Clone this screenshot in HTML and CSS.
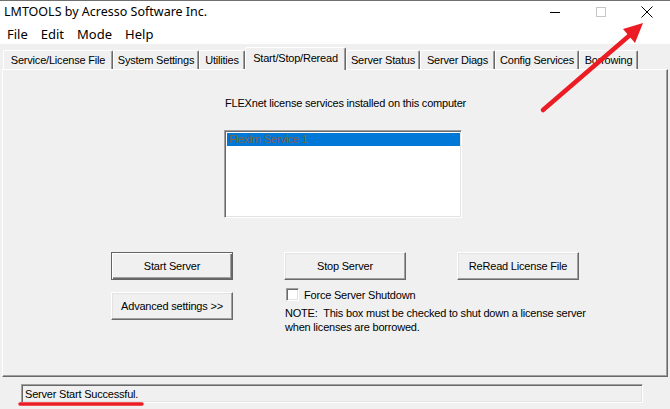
FILE: index.html
```html
<!DOCTYPE html>
<html>
<head>
<meta charset="utf-8">
<link rel="stylesheet" href="styles.css">
</head>
<body>
<div class="window">
  <div class="titlebar">
    <div class="title">LMTOOLS by Acresso Software Inc.</div>
    <div class="caption-buttons">
      <div class="cbtn"><svg width="10" height="10" viewBox="0 0 10 10"><line x1="0" y1="5.5" x2="10" y2="5.5" stroke="#000" stroke-width="1"/></svg></div>
      <div class="cbtn"><svg width="10" height="10" viewBox="0 0 10 10"><rect x="0.5" y="0.5" width="9" height="9" fill="none" stroke="#c6c6c6" stroke-width="1"/></svg></div>
      <div class="cbtn"><svg width="12" height="12" viewBox="0 0 12 12"><path d="M0.5 0.5 L11.5 11.5 M11.5 0.5 L0.5 11.5" stroke="#000" stroke-width="1" fill="none"/></svg></div>
    </div>
  </div>
  <div class="menubar">
    <span class="menu">File</span>
    <span class="menu">Edit</span>
    <span class="menu">Mode</span>
    <span class="menu">Help</span>
  </div>
  <div class="client">
    <div class="tabs">
      <div class="tab t1">Service/License File</div>
      <div class="tab t2">System Settings</div>
      <div class="tab t3">Utilities</div>
      <div class="tab t4 selected">Start/Stop/Reread</div>
      <div class="tab t5">Server Status</div>
      <div class="tab t6">Server Diags</div>
      <div class="tab t7">Config Services</div>
      <div class="tab t8">Borrowing</div>
    </div>
    <div class="panel">
      <div class="caption">FLEXnet license services installed on this computer</div>
      <div class="listbox">
        <div class="item selected-item">FlexIm Service 1</div>
      </div>
      <div class="controls">
        <div class="btn default">Start Server</div>
        <div class="btn">Stop Server</div>
        <div class="btn">ReRead License File</div>
        <div class="btn adv">Advanced settings &gt;&gt;</div>
        <div class="force">
          <div class="checkrow"><span class="checkbox"></span><span>Force Server Shutdown</span></div>
          <div class="note">NOTE:&nbsp; This box must be checked to shut down a license server<br>when licenses are borrowed.</div>
        </div>
      </div>
    </div>
    <div class="status">Server Start Successful.</div>
  </div>
</div>
<svg class="annot" width="670" height="409" viewBox="0 0 670 409">
  <line x1="543" y1="110" x2="630" y2="35" stroke="#ec1c24" stroke-width="4.5" stroke-linecap="round"/>
  <polygon points="643,23 623,29 635,43" fill="#ec1c24"/>
  <line x1="20" y1="404" x2="142" y2="404" stroke="#ec1c24" stroke-width="3.5" stroke-linecap="round"/>
</svg>
</body>
</html>
```

FILE: styles.css
```css
html, body {
  margin: 0;
  padding: 0;
}
body {
  width: 670px;
  height: 409px;
  overflow: hidden;
  background: #f0f0f0;
  position: relative;
  font-family: "Liberation Sans", Arial, sans-serif;
  font-size: 11px;
  letter-spacing: -0.2px;
  color: #000;
}
.window {
  display: flex;
  flex-direction: column;
  height: 409px;
}
.titlebar {
  height: 23px;
  border-top: 1px solid #707070;
  background: #fff;
  display: flex;
  align-items: center;
  justify-content: space-between;
}
.title {
  font-family: "Noto Sans", "Open Sans", sans-serif;
  font-size: 12.5px;
  letter-spacing: 0;
  padding-left: 4px;
  padding-bottom: 2px;
}
.caption-buttons {
  display: flex;
  height: 23px;
}
.cbtn {
  width: 46px;
  display: flex;
  align-items: center;
  justify-content: center;
  padding-bottom: 1px;
}
.menubar {
  height: 20px;
  background: #fff;
  display: flex;
  align-items: center;
  font-family: "Noto Sans", "Open Sans", sans-serif;
  font-size: 13px;
  letter-spacing: 0;
}
.menu {
  padding: 0 6.5px;
}
.menu:first-child {
  padding-left: 7px;
}
.client {
  flex: 1;
  padding-top: 3px;
  display: flex;
  flex-direction: column;
}
.tabs {
  display: flex;
  align-items: flex-end;
  height: 22px;
  padding-left: 3px;
}
.tab {
  height: 19px;
  box-sizing: border-box;
  border-top: 1px solid #fff;
  border-left: 1px solid #fff;
  border-right: 1px solid #696969;
  box-shadow: inset -1px 0 #a0a0a0;
  border-radius: 2px 2px 0 0;
  text-align: center;
  line-height: 18px;
  white-space: nowrap;
}
.t1 { width: 110px; }
.t2 { width: 86px; }
.t3 { width: 46px; }
.t4 { width: 101px; }
.t5 { width: 74px; }
.t6 { width: 75px; }
.t7 { width: 84px; }
.t8 { width: 59px; }
.tab.selected {
  height: 23px;
  margin-bottom: -1px;
  position: relative;
  z-index: 1;
  background: #f0f0f0;
  line-height: 20px;
}
.panel {
  margin-left: 2px;
  width: 666px;
  height: 308px;
  box-sizing: border-box;
  border-top: 1px solid #fff;
  border-left: 1px solid #fff;
  border-right: 1px solid #696969;
  border-bottom: 1px solid #696969;
  box-shadow: inset -1px -1px #a0a0a0;
  padding-top: 26px;
}
.caption {
  margin-left: 222px;
  line-height: 14px;
  white-space: nowrap;
}
.listbox {
  margin-left: 221px;
  margin-top: 20px;
  width: 238px;
  height: 88px;
  box-sizing: border-box;
  background: #fff;
  border-top: 1px solid #a0a0a0;
  border-left: 1px solid #a0a0a0;
  border-right: 1px solid #fff;
  border-bottom: 1px solid #fff;
  box-shadow: inset 1px 1px #696969, inset -1px -1px #e3e3e3;
  padding: 2px 1px 1px 2px;
}
.item {
  height: 13px;
  line-height: 13px;
  padding-left: 2px;
  white-space: nowrap;
}
.selected-item {
  background: #0078d7;
  color: #7f6446;
}
.controls {
  margin-top: 34px;
  margin-left: 108px;
  display: grid;
  grid-template-columns: 122px 122px 122px;
  column-gap: 51px;
  row-gap: 8px;
  align-items: start;
}
.btn {
  height: 28px;
  box-sizing: border-box;
  border: 1px solid;
  border-color: #fff #696969 #696969 #fff;
  box-shadow: inset -1px -1px #a0a0a0, inset 1px 1px #e3e3e3;
  display: flex;
  align-items: center;
  justify-content: center;
  white-space: nowrap;
}
.btn.default {
  border-color: #646464;
  box-shadow: inset 1px 1px #fff, inset -1px -1px #696969, inset -2px -2px #a0a0a0;
}
.btn.adv {
  margin-top: 4px;
}
.force {
  white-space: nowrap;
}
.checkrow {
  display: flex;
  align-items: center;
  height: 13px;
  gap: 5px;
  padding-left: 2px;
}
.checkbox {
  flex: 0 0 13px;
  width: 13px;
  height: 13px;
  box-sizing: border-box;
  background: #fff;
  border-top: 1px solid #a0a0a0;
  border-left: 1px solid #a0a0a0;
  border-right: 1px solid #fff;
  border-bottom: 1px solid #fff;
  box-shadow: inset 1px 1px #696969, inset -1px -1px #e3e3e3;
}
.note {
  margin-top: 5px;
  line-height: 14px;
  padding-left: 1px;
}
.status {
  margin-top: 7px;
  margin-left: 21px;
  width: 622px;
  height: 19px;
  box-sizing: border-box;
  border-top: 1px solid #a0a0a0;
  border-left: 1px solid #a0a0a0;
  border-right: 1px solid #fff;
  border-bottom: 1px solid #fff;
  box-shadow: inset 1px 1px #696969, inset -1px -1px #e3e3e3;
  padding-left: 3px;
  line-height: 18px;
  white-space: nowrap;
}
.annot {
  position: absolute;
  left: 0;
  top: 0;
  pointer-events: none;
}
```
